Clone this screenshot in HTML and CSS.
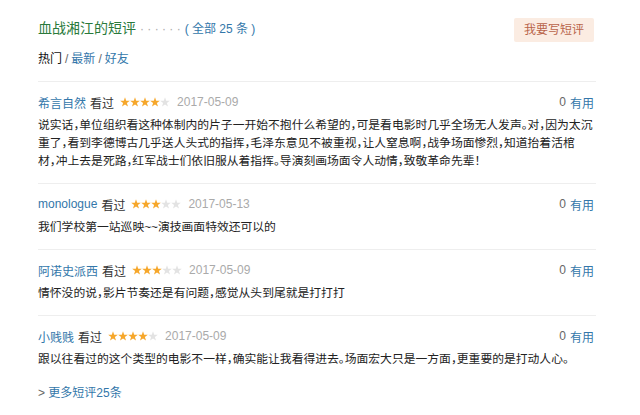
FILE: index.html
```html
<!DOCTYPE html>
<html lang="zh-CN">
<head>
<meta charset="utf-8">
<title>血战湘江的短评</title>
<link rel="stylesheet" href="styles.css">
</head>
<body>
<svg class="defs" width="0" height="0" aria-hidden="true">
  <defs>
    <polygon id="star" points="5,0.3 6.2,3.7 9.8,3.8 6.9,6 8,9.6 5,7.5 2,9.6 3.1,6 0.2,3.8 3.8,3.7"/>
  </defs>
</svg>
<div class="wrap">
  <div class="head">
    <h2 class="title">血战湘江的短评<span class="dots">· · · · · ·</span><a class="all">( 全部 25 条 )</a></h2>
    <a class="btn">我要写短评</a>
  </div>
  <div class="nav"><span class="cur">热门</span><span class="sep">/</span><a>最新</a><span class="sep">/</span><a>好友</a></div>

  <div class="comment">
    <div class="comment-head">
      <a class="user">希言自然</a><span class="seen">看过</span>
      <svg class="stars" width="50" height="10" viewBox="0 0 50 10"><use href="#star" class="on"/><use href="#star" x="10" class="on"/><use href="#star" x="20" class="on"/><use href="#star" x="30" class="on"/><use href="#star" x="40" class="off"/></svg>
      <span class="date">2017-05-09</span>
      <span class="votes">0</span><a class="useful">有用</a>
    </div>
    <p class="comment-text">说实话，单位组织看这种体制内的片子一开始不抱什么希望的，可是看电影时几乎全场无人发声。对，因为太沉<br>重了，看到李德博古几乎送人头式的指挥，毛泽东意见不被重视，让人窒息啊，战争场面惨烈，知道抬着活棺<br>材，冲上去是死路，红军战士们依旧服从着指挥。导演刻画场面令人动情，致敬革命先辈！</p>
  </div>

  <div class="comment">
    <div class="comment-head">
      <a class="user">monologue</a><span class="seen">看过</span>
      <svg class="stars" width="50" height="10" viewBox="0 0 50 10"><use href="#star" class="on"/><use href="#star" x="10" class="on"/><use href="#star" x="20" class="on"/><use href="#star" x="30" class="off"/><use href="#star" x="40" class="off"/></svg>
      <span class="date">2017-05-13</span>
      <span class="votes">0</span><a class="useful">有用</a>
    </div>
    <p class="comment-text">我们学校第一站巡映~~演技画面特效还可以的</p>
  </div>

  <div class="comment">
    <div class="comment-head">
      <a class="user">阿诺史派西</a><span class="seen">看过</span>
      <svg class="stars" width="50" height="10" viewBox="0 0 50 10"><use href="#star" class="on"/><use href="#star" x="10" class="on"/><use href="#star" x="20" class="on"/><use href="#star" x="30" class="off"/><use href="#star" x="40" class="off"/></svg>
      <span class="date">2017-05-09</span>
      <span class="votes">0</span><a class="useful">有用</a>
    </div>
    <p class="comment-text">情怀没的说，影片节奏还是有问题，感觉从头到尾就是打打打</p>
  </div>

  <div class="comment">
    <div class="comment-head">
      <a class="user">小贱贱</a><span class="seen">看过</span>
      <svg class="stars" width="50" height="10" viewBox="0 0 50 10"><use href="#star" class="on"/><use href="#star" x="10" class="on"/><use href="#star" x="20" class="on"/><use href="#star" x="30" class="on"/><use href="#star" x="40" class="off"/></svg>
      <span class="date">2017-05-09</span>
      <span class="votes">0</span><a class="useful">有用</a>
    </div>
    <p class="comment-text">跟以往看过的这个类型的电影不一样，确实能让我看得进去。场面宏大只是一方面，更重要的是打动人心。</p>
  </div>

  <div class="more"><span class="gt">&gt;</span> <a>更多短评25条</a></div>
</div>
</body>
</html>
```
FILE: styles.css
```css
body {
  margin: 0;
  background: #fff;
  color: #111;
  font-family: "Liberation Sans", Arial, "Noto Sans CJK SC", sans-serif;
  font-size: 12px;
}

.defs {
  position: absolute;
  width: 0;
  height: 0;
}

a {
  color: #37a;
  text-decoration: none;
}

.wrap {
  width: 558px;
  margin-left: 38px;
  padding-top: 18px;
}

.head {
  display: flex;
  justify-content: space-between;
  align-items: flex-start;
  height: 24px;
}

.title {
  margin: 0;
  font-size: 14px;
  font-weight: normal;
  line-height: 20px;
  color: #2a7a3b;
}

.dots {
  margin-left: 4px;
  font-size: 12px;
  color: #aaa;
}

.all {
  margin-left: 4px;
  font-size: 12px;
}

.btn {
  display: block;
  height: 24px;
  line-height: 24px;
  padding: 0 10px;
  margin-right: 2px;
  background: #fbece2;
  color: #b9644a;
  border-radius: 2px;
}

.nav {
  margin-top: 8px;
  margin-bottom: 13px;
  line-height: 18px;
}

.cur {
  color: #111;
}

.sep {
  margin: 0 3px;
  color: #666;
}

.comment {
  border-top: 1px solid #eee;
  padding: 10px 0 13px;
}

.comment-head {
  display: flex;
  align-items: center;
  height: 20px;
  padding-right: 2px;
}

.seen {
  margin-left: 4px;
  color: #333;
}

.stars {
  margin-left: 6px;
}

.stars .on {
  fill: #f6a72b;
}

.stars .off {
  fill: #e3e3e3;
}

.date {
  margin-left: 7px;
  color: #aaa;
}

.votes {
  margin-left: auto;
  color: #666;
}

.useful {
  margin-left: 4px;
}

.comment-text {
  margin: 4px 0 0;
  font-size: 11.8px;
  line-height: 18px;
  color: #222;
  font-feature-settings: "halt";
}

.more {
  margin-top: -10px;
  padding-top: 13px;
  line-height: 18px;
}

.gt {
  color: #666;
}
```
